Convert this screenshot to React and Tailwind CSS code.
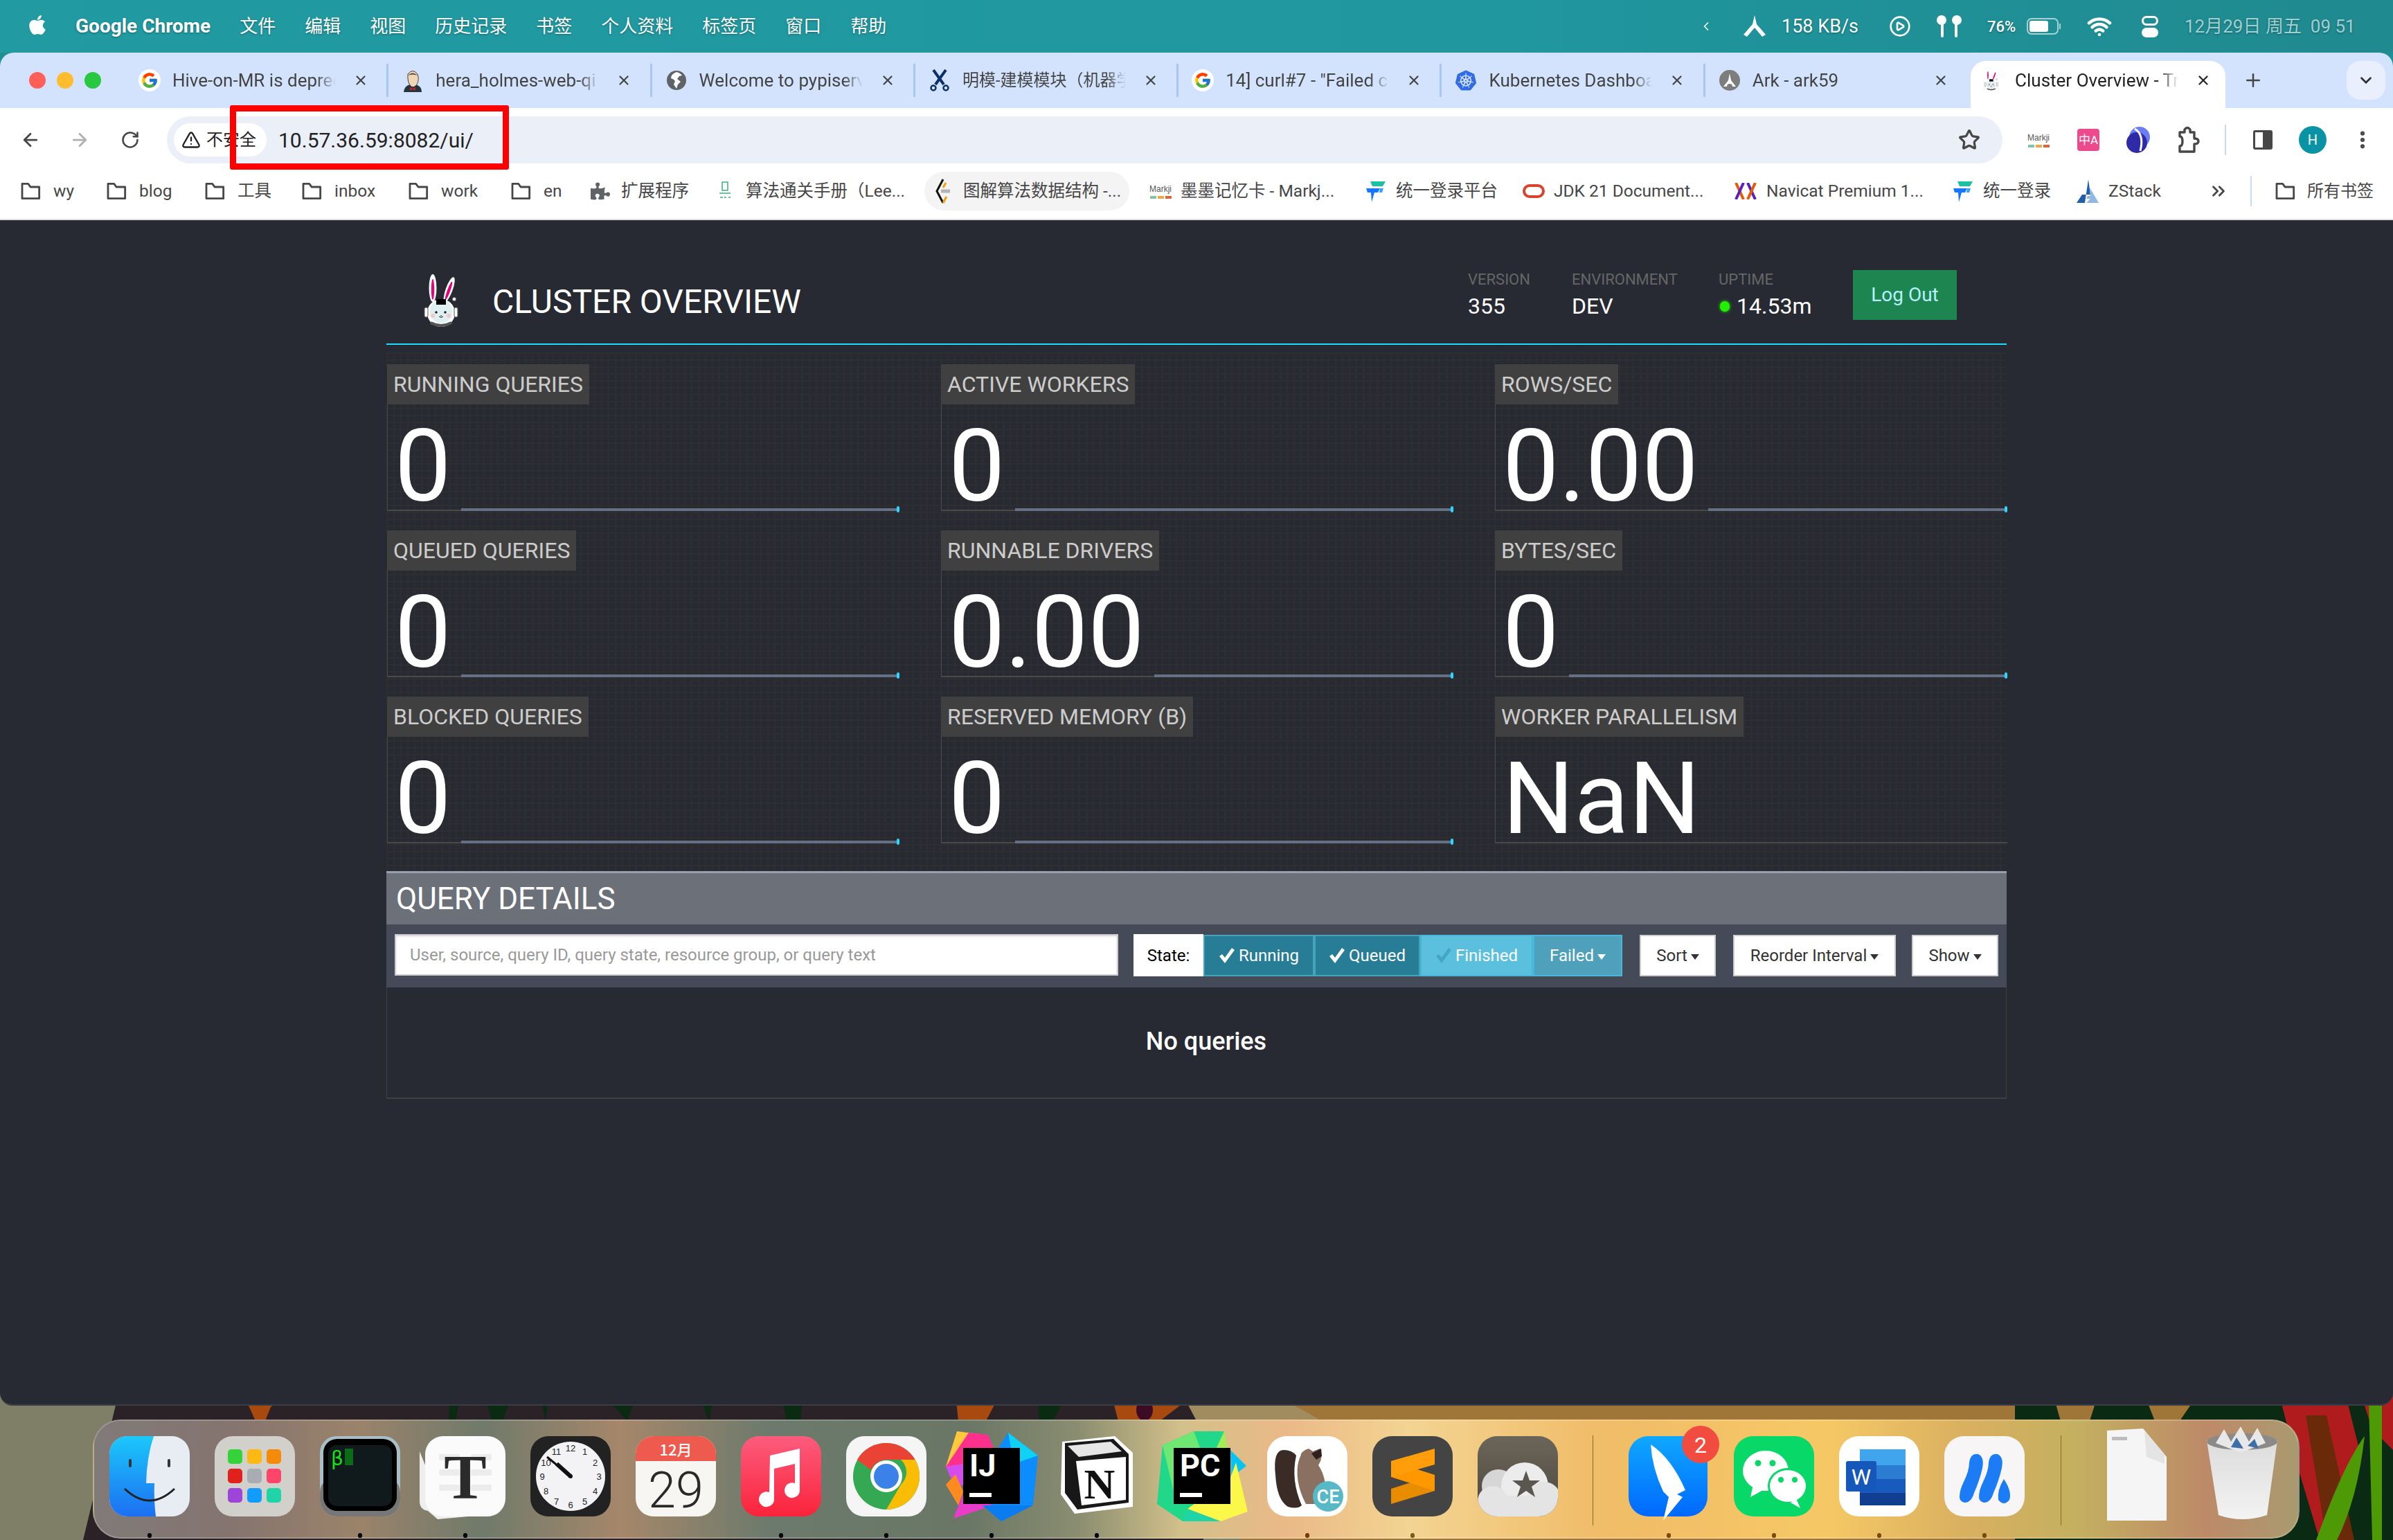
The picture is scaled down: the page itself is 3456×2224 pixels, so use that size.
import React from "react";
import { ArrowLeft, ArrowRight, RotateCw, X, Plus, ChevronDown, ChevronLeft, ChevronsRight, Star, EllipsisVertical, TriangleAlert, CirclePlay, Wifi } from "lucide-react";
import { FcGoogle } from "react-icons/fc";
import { SiKubernetes } from "react-icons/si";
import { FaPuzzlePiece, FaApple } from "react-icons/fa";

const uiFont = "[font-family:Roboto,'Noto_Sans_CJK_SC',sans-serif]";

const FolderIcon = () => (
  <svg width="32" height="32" viewBox="0 0 24 24" fill="none" stroke="#474747" strokeWidth="2.1" strokeLinejoin="round">
    <path d="M3 4h6.5l2.5 3.5h9.5V20H3z" />
  </svg>
);

const Bunny = ({ className }) => (
  <svg className={className} viewBox="0 0 60 80" fill="none">
    <ellipse cx="15" cy="20" rx="5.5" ry="20" fill="#fff" />
    <ellipse cx="15" cy="22" rx="2.2" ry="15" fill="#e6007e" />
    <g transform="rotate(20 38 24)">
      <ellipse cx="38" cy="22" rx="5" ry="19" fill="#fff" />
      <ellipse cx="38" cy="24" rx="2.2" ry="14" fill="#e6007e" />
    </g>
    <circle cx="27" cy="56" r="20" fill="#fff" />
    <circle cx="27" cy="54" r="16.5" fill="#e0f0f2" />
    <rect x="20" y="36" width="14" height="8" fill="#000" />
    <circle cx="20" cy="55" r="1.8" fill="#222" />
    <circle cx="33" cy="55" r="1.8" fill="#222" />
    <path d="M24 61q3 3 6 0M27 59v2" stroke="#222" strokeWidth="1" />
    <circle cx="15" cy="60" r="3" fill="#f2c9c9" />
    <circle cx="38" cy="60" r="3" fill="#f2c9c9" />
    <path d="M12 70q15 8 30 0" stroke="#555" strokeWidth="4" />
    <rect x="3" y="48" width="5" height="14" rx="2" fill="#fff" stroke="#555" />
    <rect x="46" y="48" width="5" height="14" rx="2" fill="#fff" stroke="#555" />
    <circle cx="46" cy="36" r="2.5" fill="#fff" stroke="#777" />
  </svg>
);

const Jenkins = () => (
  <svg width="30" height="34" viewBox="0 0 30 34">
    <path d="M2 34q1-9 9-11h8q9 2 9 11z" fill="#24343f" />
    <path d="M8 8q7-9 14 0q3 8-1 15q-4 5-8 3q-6-5-5-18z" fill="#f0d6b5" stroke="#444" />
    <path d="M8 10q7-7 14 0q-7-3-14 0z" fill="#444" />
    <path d="M11 27l4 2 4-2v5l-4-2-4 2z" fill="#c8202b" />
  </svg>
);

const Globe = () => (
  <svg width="30" height="30" viewBox="0 0 30 30">
    <circle cx="15" cy="15" r="14" fill="#5f6368" />
    <path d="M15 3q-8 3-8 9 4 1 6 4l-2 5 4 6 2-6 4-4-5-4 3-4 4-1q-3-4-8-5z" fill="#fff" />
  </svg>
);

const Scissors = () => (
  <svg width="32" height="32" viewBox="0 0 32 32" fill="none" stroke="#0b2f6b" strokeWidth="4">
    <path d="M7 1l15 21M25 1L10 22" />
    <circle cx="7" cy="27" r="3.5" strokeWidth="2.5" />
    <circle cx="25" cy="27" r="3.5" strokeWidth="2.5" />
  </svg>
);

const Ark = () => (
  <svg width="30" height="30" viewBox="0 0 30 30">
    <circle cx="15" cy="15" r="15" fill="#7d7d7d" />
    <path d="M15 5l2 10 7 9H6l7-9z" fill="#fff" />
    <circle cx="15" cy="24" r="4" fill="#7d7d7d" />
  </svg>
);

const GoogleFav = () => (
  <span className="flex h-[32px] w-[32px] items-center justify-center rounded-full bg-white">
    <FcGoogle size={26} />
  </span>
);

const tabs = [
  { icon: <GoogleFav />, title: "Hive-on-MR is deprecated in Hive" },
  { icon: <Jenkins />, title: "hera_holmes-web-qi [Jenkins]" },
  { icon: <Globe />, title: "Welcome to pypiserver!" },
  { icon: <Scissors />, title: "明模-建模模块（机器学习平台）", size: "text-[24px]" },
  { icon: <GoogleFav />, title: '14] curl#7 - "Failed connect to' },
  { icon: <SiKubernetes size={30} color="#326ce5" />, title: "Kubernetes Dashboard" },
  { icon: <Ark />, title: "Ark - ark59" },
];

const MarkjiIcon = ({ w = 36 }) => (
  <span className="flex flex-col items-center" style={{ width: w }}>
    <span className="text-[12px] leading-[16px] text-[#555] [font-family:'Liberation_Sans',sans-serif]">Markji</span>
    <span className="mt-[2px] flex gap-[2px]">
      <span className="h-[4px] w-[9px] bg-[#7fc4a4]" />
      <span className="h-[4px] w-[9px] bg-[#f4a640]" />
      <span className="h-[4px] w-[9px] bg-[#e0633c]" />
    </span>
  </span>
);

const ArrowFav = () => (
  <svg width="30" height="32" viewBox="0 0 30 32">
    <path d="M6 2h22l-4 7H9z" fill="#17c3a2" />
    <path d="M0 12h20l-3 6h-5l-4 14-1-14H2z" fill="#1677ff" />
    <path d="M20 12h5l-2 6h-4z" fill="#37a0ff" />
  </svg>
);

const bookmarks = [
  { w: "w-[124px]", icon: <FolderIcon />, label: "wy" },
  { w: "w-[142px]", icon: <FolderIcon />, label: "blog" },
  { w: "w-[140px]", icon: <FolderIcon />, label: "工具" },
  { w: "w-[154px]", icon: <FolderIcon />, label: "inbox" },
  { w: "w-[148px]", icon: <FolderIcon />, label: "work" },
  { w: "w-[115px]", icon: <FolderIcon />, label: "en" },
  { w: "w-[180px]", icon: <FaPuzzlePiece size={28} color="#5f6368" />, label: "扩展程序", gap: "gap-[14px]" },
  {
    w: "w-[314px]",
    icon: (
      <svg width="20" height="30" viewBox="0 0 20 30" fill="none" stroke="#3cae7c" strokeWidth="1.5">
        <path d="M6 2h8v12H6zM2 18h16M3 24h4M9 24h3M15 24h3" />
      </svg>
    ),
    label: "算法通关手册（Lee...",
    gap: "gap-[14px]",
  },
  {
    w: "w-[315px]",
    chip: true,
    icon: (
      <svg width="26" height="36" viewBox="0 0 26 36" fill="none" strokeWidth="3">
        <path d="M14 1l-9 17 9 17" stroke="#111" />
        <path d="M18 6l-4 7M14 35l5-9" stroke="#f59e0b" />
        <path d="M11 18h13" stroke="#b5b5b5" strokeWidth="5" />
      </svg>
    ),
    label: "图解算法数据结构 -...",
    gap: "gap-[14px]",
  },
  { w: "w-[312px]", icon: <MarkjiIcon w={30} />, label: "墨墨记忆卡 - Markj...", gap: "gap-[13px]" },
  { w: "w-[227px]", icon: <ArrowFav />, label: "统一登录平台", gap: "gap-[12px]" },
  {
    w: "w-[306px]",
    icon: <span className="h-[20px] w-[32px] rounded-full border-[4px] border-[#d8442f]" />,
    label: "JDK 21 Document...",
    gap: "gap-[13px]",
  },
  {
    w: "w-[315px]",
    icon: (
      <svg width="32" height="24" viewBox="0 0 32 24" fill="none" strokeWidth="4">
        <path d="M2 0l11 24" stroke="#e8590c" />
        <path d="M13 0L2 24" stroke="#5b21b6" />
        <path d="M19 0l11 24" stroke="#5b21b6" />
        <path d="M30 0L19 24" stroke="#e8590c" />
      </svg>
    ),
    label: "Navicat Premium 1...",
    gap: "gap-[14px]",
  },
  { w: "w-[179px]", icon: <ArrowFav />, label: "统一登录", gap: "gap-[12px]" },
  {
    w: "w-[189px]",
    icon: (
      <svg width="32" height="34" viewBox="0 0 32 34">
        <path d="M17 0l3 22H8L0 34h12z" fill="#1f5fae" />
        <path d="M19 12l13 22H14l6-6h-6l2-4h4z" fill="#8fb8e6" />
      </svg>
    ),
    label: "ZStack",
    gap: "gap-[14px]",
  },
];

const menus = ["文件", "编辑", "视图", "历史记录", "书签", "个人资料", "标签页", "窗口", "帮助"];

const MenuBar = () => (
  <div className={`relative flex h-[76px] shrink-0 items-center bg-[linear-gradient(90deg,#219aa2,#20979f_60%,#1f8a8f)] pl-[38px] text-[26px] text-white [text-shadow:0_1px_3px_rgba(0,0,0,.35)] ${uiFont}`}>
    <FaApple size={32} className="mb-[4px] shrink-0" />
    <span className="ml-[39px] shrink-0 text-[28px] font-bold">Google Chrome</span>
    <div className="ml-[42px] flex shrink-0 gap-[42px]">
      {menus.map((m) => (
        <span key={m}>{m}</span>
      ))}
    </div>
    <div className="absolute left-[2454px] top-0 flex h-[76px] items-center">
      <ChevronLeft size={30} className="w-[20px] shrink-0" />
      <svg className="ml-[42px] shrink-0" width="36" height="36" viewBox="0 0 36 36" fill="#fff">
        <path d="M18 2l3 13 13 15-5 3-11-13-11 13-5-3 13-15z" />
      </svg>
      <span className="ml-[21px] w-[111px] shrink-0 whitespace-nowrap text-[27px]">158 KB/s</span>
      <CirclePlay size={32} strokeWidth={2} className="ml-[44px] shrink-0" />
      <svg className="ml-[35px] shrink-0" width="40" height="36" viewBox="0 0 40 36" fill="#fff">
        <circle cx="9" cy="9" r="7" />
        <circle cx="31" cy="9" r="7" />
        <rect x="8" y="10" width="4" height="24" rx="2" />
        <rect x="28" y="10" width="4" height="24" rx="2" />
      </svg>
      <span className="ml-[35px] w-[46px] shrink-0 text-[22px] font-medium">76%</span>
      <div className="ml-[11px] flex h-[24px] w-[46px] shrink-0 items-center rounded-[7px] border-[2px] border-white/60 p-[2px]">
        <div className="h-full w-[72%] rounded-[3px] bg-white" />
      </div>
      <span className="ml-[1px] h-[8px] w-[2px] shrink-0 bg-white/60" />
      <Wifi size={36} strokeWidth={3} className="ml-[38px] shrink-0" />
      <div className="ml-[43px] flex w-[24px] shrink-0 flex-col gap-[3px]">
        <span className="h-[14px] rounded-full border-[3px] border-white" />
        <span className="h-[14px] rounded-full bg-white" />
      </div>
      <span className="ml-[38px] shrink-0 whitespace-pre text-[26px] text-[#9fd0d3]">12月29日 周五  09 51</span>
    </div>
  </div>
);

const TabStrip = () => (
  <div className={`flex h-[80px] shrink-0 items-center bg-[#d3e3fd] pl-[42px] text-[26px] text-[#444] ${uiFont}`}>
    <div className="flex w-[104px] shrink-0 gap-[16px]">
      <span className="h-[24px] w-[24px] rounded-full bg-[#fe5f57]" />
      <span className="h-[24px] w-[24px] rounded-full bg-[#febc2e]" />
      <span className="h-[24px] w-[24px] rounded-full bg-[#28c840]" />
    </div>
    <div className="ml-[32px] flex shrink-0">
      {tabs.map((t, i) => (
        <div key={t.title} className="relative flex h-[46px] w-[380.3px] shrink-0 items-center pl-[22px]">
          {i > 0 && <span className="absolute left-0 top-[-1px] h-[48px] w-[3px] bg-[#a9c7f5]" />}
          <span className="flex w-[32px] shrink-0 items-center justify-center">{t.icon}</span>
          <span className={`ml-[17px] w-[236px] shrink-0 overflow-hidden whitespace-nowrap [mask-image:linear-gradient(90deg,#000_88%,transparent)] ${t.size || ""}`}>{t.title}</span>
          <X size={22} strokeWidth={2.4} className="ml-[25px] shrink-0" />
        </div>
      ))}
    </div>
    <div className="relative ml-[6px] flex h-[68px] w-[368px] shrink-0 items-center self-end rounded-t-[22px] bg-white pb-[12px] pl-[15px] text-[#222]">
      <span className="flex w-[32px] shrink-0 justify-center">
        <Bunny className="h-[32px] w-[24px]" />
      </span>
      <span className="ml-[17px] w-[236px] shrink-0 overflow-hidden whitespace-nowrap [mask-image:linear-gradient(90deg,#000_88%,transparent)]">Cluster Overview - Trino</span>
      <X size={22} strokeWidth={2.4} className="ml-[25px] shrink-0" />
    </div>
    <Plus size={30} className="ml-[25px] shrink-0 text-[#444]" />
    <div className="ml-auto mr-[11px] flex h-[56px] w-[56px] items-center justify-center rounded-[20px] bg-[#e9effc]">
      <ChevronDown size={26} strokeWidth={2.6} className="text-[#333]" />
    </div>
  </div>
);

const Toolbar = () => (
  <div className={`flex h-[92px] shrink-0 items-start bg-white pl-[28px] pt-[12px] ${uiFont}`}>
    <div className="flex h-[68px] w-[32px] shrink-0 items-center justify-center">
      <ArrowLeft size={30} color="#474747" strokeWidth={2.2} />
    </div>
    <div className="ml-[39px] flex h-[68px] w-[32px] shrink-0 items-center justify-center">
      <ArrowRight size={30} color="#b0b0b0" strokeWidth={2.2} />
    </div>
    <div className="ml-[41px] flex h-[68px] w-[32px] shrink-0 items-center justify-center">
      <RotateCw size={28} color="#474747" strokeWidth={2.2} />
    </div>
    <div className="ml-[37px] flex h-[68px] w-[2651px] shrink-0 items-center rounded-full bg-[#ebeff8] pl-[10px]">
      <div className="flex h-[48px] w-[134px] shrink-0 items-center rounded-full bg-white pl-[11px]">
        <TriangleAlert size={28} color="#222" strokeWidth={2} />
        <span className="ml-[8px] text-[24px] text-[#222]">不安全</span>
      </div>
      <span className="ml-[17px] text-[30px] text-[#222]">10.57.36.59:8082/ui/</span>
      <Star size={32} color="#474747" strokeWidth={2.4} className="ml-auto mr-[32px]" />
    </div>
    <div className="ml-[16px] flex h-[68px] shrink-0 items-center">
      <div className="flex w-[72px] justify-center"><MarkjiIcon /></div>
      <div className="flex w-[72px] justify-center">
        <span className="flex h-[32px] w-[32px] items-center justify-center rounded-[4px] bg-[#ec4a8c] text-[17px] leading-none text-white">中A</span>
      </div>
      <div className="flex w-[72px] justify-center">
        <svg width="34" height="40" viewBox="0 0 34 40">
          <circle cx="19" cy="16" r="15" fill="#6d7df5" />
          <circle cx="15" cy="24" r="15" fill="#2f2aa8" />
          <path d="M12 4q14 8 8 32" stroke="#fff" strokeWidth="3" fill="none" />
        </svg>
      </div>
      <div className="flex w-[72px] justify-center">
        <svg width="34" height="40" viewBox="0 0 34 40" fill="none" stroke="#474747" strokeWidth="3.4" strokeLinejoin="round">
          <path d="M5 9h7V5q4-5 8 0v4h6v9q6 0 6 4t-6 4v11H5v-8q4 0 4-7t-4-7z" />
        </svg>
      </div>
      <span className="ml-[17px] h-[44px] w-[2px] bg-[#c9daf8]" />
      <div className="ml-[17px] flex w-[72px] justify-center">
        <span className="flex h-[28px] w-[28px] justify-end rounded-[3px] border-[3px] border-[#474747]">
          <span className="w-[11px] bg-[#474747]" />
        </span>
      </div>
      <div className="flex w-[72px] justify-center">
        <span className="flex h-[40px] w-[40px] items-center justify-center rounded-full bg-[#0a93a5] text-[20px] text-white">H</span>
      </div>
      <div className="flex w-[72px] justify-center"><EllipsisVertical size={32} color="#474747" strokeWidth={2.6} /></div>
    </div>
  </div>
);

const Bookmarks = () => (
  <div className={`flex h-[70px] shrink-0 items-start border-b-[2px] border-[#e0e0e0] bg-white pl-[28px] text-[24.5px] text-[#474747] ${uiFont}`}>
    {bookmarks.map((b) => (
      <div key={b.label} className={`${b.w} relative flex h-[56px] shrink-0 items-center whitespace-nowrap ${b.gap || "gap-[17px]"}`}>
        {b.chip && <span className="absolute -left-[10px] top-0 h-[56px] w-[296px] rounded-full bg-[#f4f4f4]" />}
        <span className="relative flex w-[32px] shrink-0 justify-center">{b.icon}</span>
        <span className="relative">{b.label}</span>
      </div>
    ))}
    <ChevronsRight size={30} color="#474747" strokeWidth={2.2} className="mt-[13px] w-[32px] shrink-0" />
    <span className="ml-[30px] mt-[6px] h-[44px] w-[2px] shrink-0 bg-[#c9daf8]" />
    <div className="ml-[32px] flex h-[56px] shrink-0 items-center gap-[16px] whitespace-nowrap text-[24px]">
      <FolderIcon />
      <span>所有书签</span>
    </div>
  </div>
);

const stats = [
  { label: "RUNNING QUERIES", value: "0" },
  { label: "ACTIVE WORKERS", value: "0" },
  { label: "ROWS/SEC", value: "0.00" },
  { label: "QUEUED QUERIES", value: "0" },
  { label: "RUNNABLE DRIVERS", value: "0.00" },
  { label: "BYTES/SEC", value: "0" },
  { label: "BLOCKED QUERIES", value: "0" },
  { label: "RESERVED MEMORY (B)", value: "0" },
  { label: "WORKER PARALLELISM", value: "NaN", noLine: true },
];

const StatTile = ({ label, value, noLine }) => (
  <div className="flex h-[212px] w-[740px] flex-col">
    <div className="flex h-[58px] w-fit items-center bg-[#404040] px-[9px] text-[32px] text-[#ccc]">{label}</div>
    <div className="flex h-[154px] items-end border-b-[2px] border-l-[1px] border-[#4a4a4a]">
      <span className="self-start pl-[10px] pr-[14px] pt-[17px] text-[145px] leading-none text-white">{value}</span>
      {!noLine && (
        <div className="relative -mb-[2px] h-[4px] flex-1 bg-[#667085]">
          <span className="absolute right-0 top-[-3px] h-[9px] w-[4px] rounded-full bg-[#1edcff]" />
        </div>
      )}
    </div>
  </div>
);

const Caret = ({ color = "#333" }) => (
  <svg width="12" height="8" viewBox="0 0 12 8" className="ml-[5px] mt-[4px] shrink-0">
    <path d="M0 0h12L6 8z" fill={color} />
  </svg>
);

const Check = ({ color = "#fff" }) => (
  <svg width="24" height="22" viewBox="0 0 24 22" className="mr-[5px] shrink-0">
    <path d="M1 12l4-3 4 5L19 0l4 3L9 22z" fill={color} />
  </svg>
);

const stateButtons = [
  { label: "Running", w: "w-[160px]", cls: "bg-[#287d96] border-[#46a3bc]", check: "#fff" },
  { label: "Queued", w: "w-[153px]", cls: "bg-[#287d96] border-[#46a3bc]", check: "#fff" },
  { label: "Finished", w: "w-[163px]", cls: "bg-[#5bc0de] border-[#46b8da]", check: "#46a5c2" },
];

const QuerySection = () => (
  <div className="flex flex-col">
    <div className="flex h-[77px] items-center border-t-[3px] border-[#97a0ae] bg-[#6c7079] pl-[14px] text-[44px] text-white">QUERY DETAILS</div>
    <div className="flex h-[91px] items-start bg-[#454a58] pl-[12px] pt-[14px] text-[24px]">
      <div className="flex h-[60px] w-[1045px] shrink-0 items-center border-[2px] border-[#ccc] bg-white pl-[20px] text-[#999] shadow-[inset_0_2px_3px_rgba(0,0,0,.1)]">
        User, source, query ID, query state, resource group, or query text
      </div>
      <div className="ml-[22px] flex h-[61px] w-[101px] shrink-0 items-center justify-center bg-white text-black">State:</div>
      {stateButtons.map((b) => (
        <div key={b.label} className={`mt-[1px] flex h-[60px] ${b.w} shrink-0 items-center justify-center border-[2px] text-white ${b.cls}`}>
          <Check color={b.check} />
          {b.label}
        </div>
      ))}
      <div className="mt-[1px] flex h-[60px] w-[129px] shrink-0 items-center justify-center border-[2px] border-[#46b8da] bg-[#4fa1bb] text-white">
        Failed
        <Caret color="#fff" />
      </div>
      <div className="ml-[25px] mt-[1px] flex h-[60px] w-[110px] shrink-0 items-center justify-center border-[2px] border-[#ccc] bg-white text-[#333]">
        Sort
        <Caret />
      </div>
      <div className="ml-[25px] mt-[1px] flex h-[60px] w-[235px] shrink-0 items-center justify-center border-[2px] border-[#ccc] bg-white text-[#333]">
        Reorder Interval
        <Caret />
      </div>
      <div className="ml-[23px] mt-[1px] flex h-[60px] w-[125px] shrink-0 items-center justify-center border-[2px] border-[#ccc] bg-white text-[#333]">
        Show
        <Caret />
      </div>
    </div>
    <div className="flex h-[161px] items-center justify-center border-x-[1px] border-b-[2px] border-[#404040] pb-[4px] pl-[28px] text-[36px] font-medium text-white">No queries</div>
  </div>
);

const ClusterPage = () => (
  <div className="flex-1 bg-[#272a33] [font-family:Roboto,sans-serif]">
    <div className="mx-auto flex w-[2340px] flex-col">
      <div className="flex h-[180px] items-center border-b-[2px] border-[#1edcff] pt-[58px]">
        <Bunny className="ml-[52px] h-[80px] w-[60px] shrink-0" />
        <h1 className="ml-[41px] text-[48px] leading-none text-white">CLUSTER OVERVIEW</h1>
        <div className="-mt-[20px] ml-auto flex items-center pr-[72px]">
          <div className="w-[150px]">
            <div className="text-[22px] leading-[26px] text-[#666]">VERSION</div>
            <div className="mt-[6px] text-[32px] leading-[38px] text-white">355</div>
          </div>
          <div className="w-[212px]">
            <div className="text-[22px] leading-[26px] text-[#666]">ENVIRONMENT</div>
            <div className="mt-[6px] text-[32px] leading-[38px] text-white">DEV</div>
          </div>
          <div className="w-[194px]">
            <div className="text-[22px] leading-[26px] text-[#666]">UPTIME</div>
            <div className="mt-[6px] flex items-center text-[32px] leading-[38px] text-white">
              <span className="ml-[2px] mr-[10px] h-[15px] w-[14px] rounded-full bg-[#22f000] shadow-[0_0_4px_#22f000]" />
              14.53m
            </div>
          </div>
          <div className="flex h-[72px] w-[150px] items-center justify-center bg-[#1d8650] text-[28px] text-[#b5f0fb]">Log Out</div>
        </div>
      </div>
      <div className="mt-[11px] grid grid-cols-[800px_800px_740px] gap-y-[28px] bg-[linear-gradient(#2e2e30_2px,transparent_2px),linear-gradient(90deg,#2e2e30_2px,transparent_2px)] bg-[size:10px_10px] pb-[40px] pl-[1px] pt-[17px]">
        {stats.map((s) => (
          <StatTile key={s.label} {...s} />
        ))}
      </div>
      <QuerySection />
    </div>
  </div>
);

const AppIcon = ({ children, dot, dotColor = "bg-black" }) => (
  <div className="relative h-[116px] w-[116px] shrink-0">
    {children}
    {dot && <span className={`absolute bottom-[-31px] left-[55px] h-[7px] w-[6px] rounded-full ${dotColor}`} />}
  </div>
);

const Svg = ({ children }) => (
  <svg width="116" height="116" viewBox="0 0 116 116" className="overflow-visible">
    {children}
  </svg>
);

const Finder = () => (
  <Svg>
    <defs>
      <linearGradient id="finderL" x1="0" y1="0" x2="0" y2="1">
        <stop offset="0" stopColor="#1bc8fb" />
        <stop offset="1" stopColor="#1c6ff2" />
      </linearGradient>
    </defs>
    <rect width="116" height="116" rx="26" fill="#e8edf4" />
    <path d="M26 0h38q-10 30-11 68h12q-1 24 2 48H26A26 26 0 0 1 0 90V26A26 26 0 0 1 26 0z" fill="url(#finderL)" />
    <rect x="28" y="33" width="4" height="12" rx="2" fill="#333" />
    <rect x="84" y="33" width="4" height="12" rx="2" fill="#333" />
    <path d="M22 76q36 34 72 0" stroke="#222" strokeWidth="3" fill="none" />
  </Svg>
);

const Launchpad = () => {
  const colors = ["#35d33a", "#fdb913", "#f58a0b", "#e0211c", "#a7adb3", "#ff4569", "#9c45d8", "#129cff", "#1fd4a6"];
  return (
    <Svg>
      <rect width="116" height="116" rx="26" fill="#d2d0cb" />
      {colors.map((c, i) => (
        <rect key={c} x={19 + (i % 3) * 28} y={19 + Math.floor(i / 3) * 28} width="21" height="21" rx="5" fill={c} />
      ))}
    </Svg>
  );
};

const Iterm = () => (
  <Svg>
    <rect width="116" height="116" rx="24" fill="#a9bfc8" />
    <rect y="58" width="116" height="58" rx="24" fill="#777" />
    <rect x="5" y="4" width="106" height="104" rx="20" fill="#000" />
    <rect x="12" y="13" width="92" height="88" rx="12" fill="#101a1c" />
    <text x="16" y="42" fontSize="28" fill="#18e018" fontFamily="DejaVu Sans">β</text>
    <rect x="36" y="18" width="12" height="24" fill="#0d6b18" />
  </Svg>
);

const Typora = () => (
  <Svg>
    <path d="M-8 22v72q0 12 12 14l14 12 44-4H30z" fill="#eee" />
    <rect width="116" height="116" rx="26" fill="#fbfbfb" />
    {[26, 48, 70].map((y) => (
      <g key={y} fill="#ececec">
        <rect x="20" y={y} width="30" height="9" rx="2" />
        <rect x="66" y={y} width="30" height="9" rx="2" />
      </g>
    ))}
    <text x="58" y="90" textAnchor="middle" fontSize="92" fontFamily="Liberation Serif" fontWeight="700" fill="#2b2b2b">T</text>
  </Svg>
);

const Clock = () => {
  const nums = [12, 1, 2, 3, 4, 5, 6, 7, 8, 9, 10, 11];
  return (
    <Svg>
      <rect width="116" height="116" rx="26" fill="#222" />
      <circle cx="58" cy="58" r="50" fill="#f3f3f5" />
      {nums.map((n, i) => {
        const a = (i * Math.PI) / 6;
        return (
          <text key={n} x={58 + 41 * Math.sin(a)} y={63 - 41 * Math.cos(a)} textAnchor="middle" fontSize="13" fill="#222" fontFamily="Liberation Sans">
            {n}
          </text>
        );
      })}
      <path d="M58 58L24 30" stroke="#111" strokeWidth="3" />
      <path d="M58 58L38 40" stroke="#111" strokeWidth="6" />
      <circle cx="58" cy="58" r="3" fill="#111" />
    </Svg>
  );
};

const Calendar = () => (
  <Svg>
    <defs>
      <clipPath id="calClip"><rect width="116" height="116" rx="26" /></clipPath>
    </defs>
    <g clipPath="url(#calClip)">
      <rect width="116" height="116" fill="#f7f6f3" />
      <rect width="116" height="36" fill="#ee5a4e" />
    </g>
    <text x="58" y="28" textAnchor="middle" fontSize="22" fontWeight="500" fill="#fff" fontFamily="Noto Sans CJK SC">12月</text>
    <text x="58" y="103" textAnchor="middle" fontSize="72" fill="#2a2a2a" fontFamily="Roboto" fontWeight="300">29</text>
  </Svg>
);

const Music = () => (
  <Svg>
    <defs>
      <linearGradient id="musicG" x1="0" y1="0" x2="0" y2="1">
        <stop offset="0" stopColor="#fc5c7d" />
        <stop offset="1" stopColor="#fb233b" />
      </linearGradient>
    </defs>
    <rect width="116" height="116" rx="26" fill="url(#musicG)" />
    <path d="M42 28l43-10v60a11 11 0 1 1-7-10V40l-30 7v44a11 11 0 1 1-7-10z" fill="#fff" />
  </Svg>
);

const ChromeIcon = () => (
  <Svg>
    <rect width="116" height="116" rx="26" fill="#f5f5f5" />
    <circle cx="58" cy="58" r="48" fill="#34a853" />
    <path d="M58 10a48 48 0 0 1 41.6 24H58a24 24 0 0 0-22 15L16 34A48 48 0 0 1 58 10z" fill="#ea4335" />
    <path d="M99.6 34A48 48 0 0 1 58 106l21-36a24 24 0 0 0 0-36z" fill="#fbbc04" />
    <circle cx="58" cy="58" r="23" fill="#fff" />
    <circle cx="58" cy="58" r="18" fill="#3b82e8" />
  </Svg>
);

const JetBrains = ({ label, id }) => (
  <Svg>
    {id === "ij" ? (
      <g>
        <path d="M82 -5L125 28l-7 71-46 24-27-23 15-70z" fill="#0b8cff" />
        <path d="M82 -5L125 28 90 40z" fill="#0fd2f7" />
        <path d="M8 -7l32 4-23 43-25 4z" fill="#ffc83d" />
        <path d="M25 -5l28 3 17 42-53 10-25-6z" fill="#ff2f8e" />
        <path d="M-8 44l25-4v30l-11 6z" fill="#d44cf0" />
        <path d="M-8 70l14-15 11 25-7 20z" fill="#ff8a1f" />
        <path d="M3 119l14-36 43 17-30 10z" fill="#e93dc9" />
        <path d="M45 100h73l-46 23z" fill="#0a7cf0" />
      </g>
    ) : (
      <g>
        <path d="M1 13L46 -7h44v67l-60 63L-7 98z" fill="#21d789" />
        <path d="M1 13L46 -7l14 37-43 50z" fill="#6ee873" />
        <path d="M90 -7l8 40-36 20z" fill="#a3ec55" />
        <path d="M99 20l23 23-22 17z" fill="#07c3f2" />
        <path d="M99 60l8-22 17 71-39 14-48-18z" fill="#fcf84a" />
        <path d="M30 123l7-18 48 18z" fill="#1fd4a6" />
      </g>
    )}
    <rect x="17" y="17" width="82" height="81" fill="#000" />
    <text x="26" y="58" fontSize="45" fontWeight="700" fill="#fff" fontFamily="Roboto">{label}</text>
    <rect x="26" y="82" width="32" height="6" fill="#fff" />
  </Svg>
);

const Notion = () => (
  <Svg>
    <path d="M8 8L84 0l26 24v78l-84 10L6 84z" fill="#fff" />
    <path d="M12 10L82 4l22 22v70l-74 10L12 82z" fill="#181818" />
    <path d="M28 36l72-6v62l-64 8z" fill="#fff" />
    <path d="M16 14l62-6 16 14-62 8z" fill="#e6e6e6" />
    <text x="62" y="90" textAnchor="middle" fontSize="62" fontWeight="700" fontFamily="Liberation Serif" fill="#111">N</text>
  </Svg>
);

const DBeaver = () => (
  <Svg>
    <rect width="116" height="116" rx="28" fill="#fff" />
    <path d="M24 20q-16 0-12 36 2 36 18 46 14 4 20-2-16-36-8-72-6-8-18-8z" fill="#3a2b27" />
    <path d="M46 32q4-12 14-14l6 4 10-4q6 12-2 24 14 20 10 56H56q-18-34-10-66z" fill="#8a7061" />
    <path d="M64 25l14-7 1 11-8 5z" fill="#2e211d" />
    <path d="M48 26q-16 34 6 74" stroke="#fff" strokeWidth="2.5" fill="none" />
    <circle cx="88" cy="87" r="22" fill="#56b9c5" />
    <text x="88" y="97" textAnchor="middle" fontSize="27" fill="#fff" fontFamily="Roboto" fontWeight="500">CE</text>
  </Svg>
);

const Sublime = () => (
  <Svg>
    <rect width="116" height="116" rx="28" fill="#444" />
    <path d="M90 56v23L27 98V76z" fill="#e88c00" />
    <path d="M27 36v23l63 20V56z" fill="#ff9800" />
    <path d="M90 18v23L27 59V36z" fill="#ff9d0a" />
  </Svg>
);

const CloudStar = () => (
  <Svg>
    <defs>
      <linearGradient id="cloudG" x1="0" y1="0" x2="0" y2="1">
        <stop offset="0" stopColor="#6b6559" />
        <stop offset="1" stopColor="#4d4840" />
      </linearGradient>
      <clipPath id="cloudClip"><rect width="116" height="116" rx="28" /></clipPath>
    </defs>
    <rect width="116" height="116" rx="28" fill="url(#cloudG)" />
    <g clipPath="url(#cloudClip)">
      <circle cx="30" cy="72" r="24" fill="#d6d6d6" />
      <circle cx="68" cy="72" r="34" fill="#ececec" />
      <circle cx="22" cy="94" r="22" fill="#e4e4e4" />
      <circle cx="96" cy="90" r="24" fill="#e4e4e4" />
      <rect x="20" y="86" width="80" height="30" fill="#e4e4e4" />
    </g>
    <path d="M70 50l5 14h15l-12 9 5 15-13-9-13 9 5-15-12-9h15z" fill="#5a5650" />
  </Svg>
);

const Lark = () => (
  <Svg>
    <defs>
      <linearGradient id="larkG" x1="0" y1="0" x2="0" y2="1">
        <stop offset="0" stopColor="#0fa8ff" />
        <stop offset="1" stopColor="#0068ff" />
      </linearGradient>
    </defs>
    <rect width="114" height="116" rx="28" fill="url(#larkG)" />
    <path d="M32 12q30 20 50 66l-12 6 8 4-28 34 8-34-8-8q-16-34-18-68z" fill="#fff" />
    <circle cx="104" cy="12" r="27" fill="#f24b40" />
    <text x="104" y="24" textAnchor="middle" fontSize="32" fill="#fff" fontFamily="Roboto">2</text>
  </Svg>
);

const WeChat = () => (
  <Svg>
    <rect width="116" height="116" rx="28" fill="#07d868" />
    <ellipse cx="46" cy="50" rx="33" ry="29" fill="#fff" />
    <path d="M28 70l-4 18 18-10z" fill="#fff" />
    <ellipse cx="78" cy="72" rx="29" ry="26" fill="#07d868" />
    <ellipse cx="78" cy="72" rx="26" ry="23" fill="#fff" />
    <path d="M90 90l6 14-14-8z" fill="#fff" />
    <circle cx="35" cy="39" r="4.5" fill="#07d868" />
    <circle cx="56" cy="39" r="4.5" fill="#07d868" />
    <circle cx="68" cy="63" r="4" fill="#07d868" />
    <circle cx="88" cy="63" r="4" fill="#07d868" />
  </Svg>
);

const Word = () => (
  <Svg>
    <rect width="116" height="116" rx="28" fill="#fff" />
    <rect x="30" y="19" width="66" height="23" fill="#41a5ee" />
    <rect x="30" y="42" width="66" height="20" fill="#2b7cd3" />
    <rect x="30" y="62" width="66" height="20" fill="#185abd" />
    <rect x="30" y="82" width="66" height="18" fill="#103f91" />
    <rect x="10" y="36" width="44" height="44" rx="3" fill="#1657ba" />
    <text x="32" y="70" textAnchor="middle" fontSize="32" fill="#fff" fontFamily="Roboto">W</text>
  </Svg>
);

const MoIcon = () => (
  <Svg>
    <rect width="116" height="116" rx="28" fill="#f7f5f6" />
    <path d="M22 88q0-10 6-22 8-16 8-28 2-14 13-12 9 4 6 20-4 18-12 36-4 14-14 14-7-2-7-8z" fill="#1c7cf5" />
    <path d="M50 88q0-10 6-22 8-16 8-28 2-14 13-12 9 4 6 20-4 18-12 36-4 14-14 14-7-2-7-8z" fill="#1c7cf5" />
    <path d="M86 62q12 18 8 30-8 10-16 0-2-14 8-30z" fill="#1c7cf5" />
  </Svg>
);

const Doc = () => (
  <Svg>
    <path d="M15 -8l52-3 34 41v92H15z" fill="#f5f5f5" />
    <path d="M69 -8l29 34v14L72 30z" fill="#e4e4e4" />
    <rect x="22" y="1" width="22" height="5" fill="#bdbdbd" />
  </Svg>
);

const Trash = () => (
  <Svg>
    <defs>
      <linearGradient id="trashG" x1="0" y1="0" x2="0" y2="1">
        <stop offset="0" stopColor="#dcdcdc" />
        <stop offset="1" stopColor="#f3f3f3" />
      </linearGradient>
    </defs>
    <path d="M7 6h102l-15 108q-36 12-70 0z" fill="url(#trashG)" />
    <ellipse cx="58" cy="8" rx="51" ry="12" fill="#8c8a88" />
    <path d="M20 10l12-20 10 18 14-22 12 22 12-20 12 22-36 14z" fill="#e8e8e8" />
    <path d="M42 16l8-14 10 16zM66 14l10-10 6 14z" fill="#3f6fa8" />
  </Svg>
);

const dockBg = "bg-[linear-gradient(90deg,#807a78_0px,#85746f_200px,#9b836a_380px,#707a6b_560px,#a5876a_760px,#6b7a6c_980px,#6a7766_1260px,#8a8d70_1420px,#d3c08a_1570px,#eab987_1720px,#f3d492_1900px,#f0bc68_2180px,#f6c865_2500px,#d9b060_2700px,#c4b060_2860px,#bd8a68_3050px,#a89a70_3187px)]";

const Dock = () => (
  <div className={`absolute left-[134px] top-[20px] flex h-[172px] w-[3187px] items-start rounded-[40px] border-[2px] border-white/20 ${dockBg} pl-[22px] pt-[22px]`}>
    <div className="flex gap-[36px]">
      <AppIcon dot><Finder /></AppIcon>
      <AppIcon><Launchpad /></AppIcon>
      <AppIcon dot><Iterm /></AppIcon>
      <AppIcon dot><Typora /></AppIcon>
      <AppIcon><Clock /></AppIcon>
      <AppIcon><Calendar /></AppIcon>
      <AppIcon dot><Music /></AppIcon>
      <AppIcon dot><ChromeIcon /></AppIcon>
      <AppIcon dot><JetBrains label="IJ" id="ij" /></AppIcon>
      <AppIcon dot><Notion /></AppIcon>
      <AppIcon><JetBrains label="PC" id="pc" /></AppIcon>
      <AppIcon dot dotColor="bg-[#7a3a08]"><DBeaver /></AppIcon>
      <AppIcon dot dotColor="bg-[#7a5a18]"><Sublime /></AppIcon>
      <AppIcon><CloudStar /></AppIcon>
    </div>
    <span className="ml-[50px] mt-[-1px] h-[130px] w-[1px] shrink-0 bg-[#8a6a2a]" />
    <div className="ml-[51px] flex gap-[36px]">
      <AppIcon dot dotColor="bg-[#7a4a08]"><Lark /></AppIcon>
      <AppIcon dot dotColor="bg-[#7a4a08]"><WeChat /></AppIcon>
      <AppIcon dot dotColor="bg-[#7a4a08]"><Word /></AppIcon>
      <AppIcon dot dotColor="bg-[#7a4a08]"><MoIcon /></AppIcon>
    </div>
    <span className="ml-[52px] mt-[-1px] h-[130px] w-[1px] shrink-0 bg-[#8a6a2a]" />
    <div className="ml-[51px] flex gap-[36px]">
      <AppIcon><Doc /></AppIcon>
      <AppIcon><Trash /></AppIcon>
    </div>
  </div>
);

// backdrop behind the window and dock, y 0 here is y 1984 on the page
const Wallpaper = () => (
  <svg className="absolute bottom-0 left-0" width="3456" height="240" viewBox="0 0 3456 240">
    <rect width="3456" height="240" fill="#7e7f66" />
    <path d="M178 0h1560v240H120z" fill="#2a2226" />
    <path d="M650 30h14l-6 40h-10zM700 30h40l-14 38h-16zM780 30h12l-4 40zM870 30h50l-14 38zM1010 30h20l-6 40zM1130 30h30l-4 40h-20zM1500 30h40l-20 40h-20z" fill="#0b2a12" />
    <path d="M335 30h80l-24 18-8 20h-14l-10-22zM1380 30h64l-20 38h-40zM1605 30h120l-50 38h-60z" fill="#a8490f" />
    <ellipse cx="1653" cy="52" rx="12" ry="16" fill="#3d0c24" />
    <path d="M1708 30h140l60 38h-180z" fill="#a08c5e" />
    <path d="M1840 30h1070v210H1790l120-172z" fill="#9f7538" />
    <path d="M2910 0h546v240H2910z" fill="#0a2a14" />
    <path d="M2965 30h65l-12 38h-42zM3097 30h77l-26 38h-36z" fill="#9f7538" />
    <path d="M3284 0h96l30 120-60 120-30-100zM3400 0h56v110l-30-30z" fill="#b01c1e" />
    <path d="M3330 60l30 180h40l-40-180z" fill="#6a2a0a" />
    <path d="M3345 240q40-110 70-150-10 90-40 150z" fill="#4d9a06" />
    <path d="M3420 0h20v240h-14z" fill="#4d9a06" />
  </svg>
);

export default function App() {
  return (
    <div className="relative h-[2224px] w-[3456px] overflow-hidden bg-[#1f8f96]">
      <Wallpaper />
      <MenuBar />
      <div className="relative flex h-[1954px] w-[3456px] flex-col overflow-hidden rounded-b-[18px] rounded-t-[20px] border-b-[2px] border-[#3a3d45]">
        <TabStrip />
        <Toolbar />
        <Bookmarks />
        <ClusterPage />
      </div>
      <div className="relative h-[194px]">
        <Dock />
      </div>
      {/* red annotation box from the screenshot */}
      <div className="absolute left-[332px] top-[152px] h-[93px] w-[403px] rounded-[3px] border-[9px] border-[#ff0000]" />
    </div>
  );
}
